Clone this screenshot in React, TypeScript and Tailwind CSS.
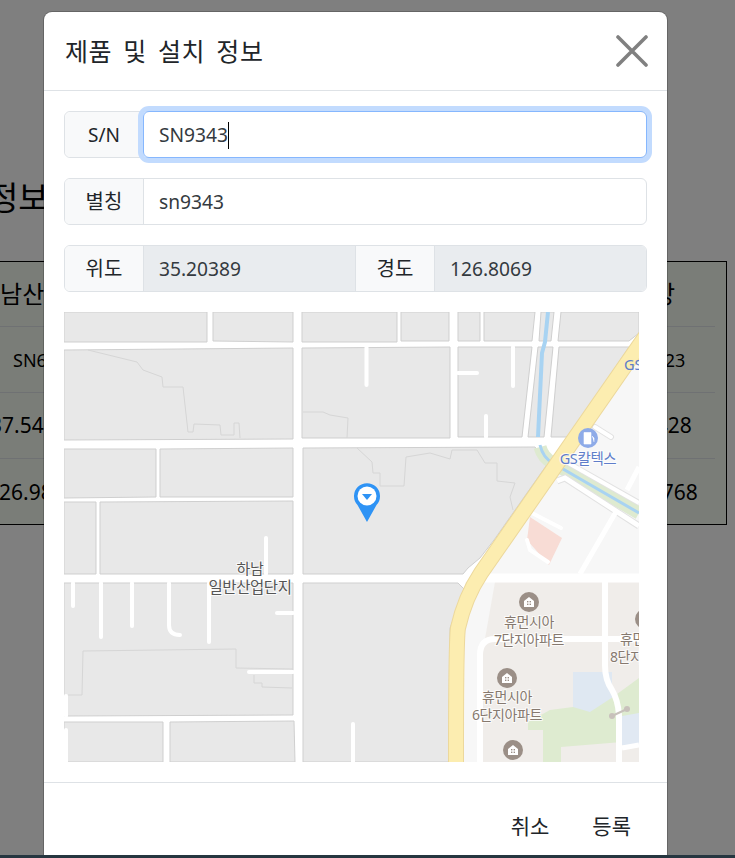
const font = { fontFamily: '"Noto Sans", "Noto Sans CJK KR", sans-serif' };

const blocks = [
  '64,312 207,312 207,342 64,342',
  '213,312 293,312 293,342 213,341',
  '302,312 397,312 397,342 302,342',
  '401,312 449,312 449,341 401,341',
  '458,312 480,312 480,341 458,341',
  '484,312 535,312 532,341 484,341',
  '541,312 554,312 551,341 539,341',
  '561,312 639,312 639,333 629,341 558,341',
  '64,350 293,348 293,439 64,440',
  '302,348 450,347 450,438 302,438',
  '458,347 532,347 522,437 458,437',
  '538,347 553,347 544,437 528,437',
  '559,347 629,347 582,417 567,437 551,437',
  '64,449 156,449 156,497 64,498',
  '160,449 293,448 293,497 160,497',
  '64,502 96,502 96,574 64,574',
  '100,502 293,501 293,574 100,574',
  '64,583 293,583 293,715 68,716 64,716',
  '64,722 163,722 163,762 64,762',
  '170,722 294,721 295,762 170,762',
  '303,448 535,447 541,455 546,466 494,540 480,558 468,568 463,574 303,574',
  '303,583 458,583 465,590 450,628 449,762 303,762',
];

const parcels = [
  '88,350 137,362 143,370 162,377 163,387 183,387 187,423 188,432 193,432 194,424 220,425 221,435 234,435 234,423 239,423 240,438',
  '303,412 323,412 330,415 348,418 347,438',
  '357,448 372,462 373,473 380,473 380,486 404,486 406,457 430,453 450,459 452,450 477,450 485,463 497,463 497,481 515,483 510,497 513,510',
  '68,695 82,695 83,651 236,649 236,668 293,669',
  '254,675 254,683 262,683 262,687 292,688',
];

const stubs = [
  'M366.5 347V385', 'M458 373H477', 'M513 347V386', 'M486 437V416',
  'M73 583V606', 'M101 583V637', 'M132 583V626', 'M169 583V625Q169 635 180 635',
  'M209 583V642', 'M293 613H277', 'M293 672H249', 'M66 716V696', 'M66 730V762',
  'M266 574V538', 'M353 762V724',
];

function PoiHouse({ x, y }: { x: number; y: number }) {
  return (
    <g>
      <circle cx={x} cy={y} r={10} fill="#9b8f87" />
      <path d={`M${x - 5} ${y + 5}V${y - 1}L${x} ${y - 5}L${x + 5} ${y - 1}V${y + 5}Z`} fill="#fff" />
      <rect x={x - 2} y={y - 1} width={1.4} height={1.4} fill="#9b8f87" />
      <rect x={x + 0.6} y={y - 1} width={1.4} height={1.4} fill="#9b8f87" />
      <rect x={x - 2} y={y + 1.6} width={1.4} height={1.4} fill="#9b8f87" />
      <rect x={x + 0.6} y={y + 1.6} width={1.4} height={1.4} fill="#9b8f87" />
    </g>
  );
}

function MapLabel({ x, y, fill, size = 14, children }: { x: number; y: number; fill: string; size?: number; children: string }) {
  return (
    <text x={x} y={y} textAnchor="middle" fontSize={size} fill={fill} stroke="#ffffff" strokeOpacity={0.75} strokeWidth={2} paintOrder="stroke" letterSpacing={-0.4}>
      {children}
    </text>
  );
}

function MapView() {
  return (
    <svg viewBox="64 312 575 450" className="block w-[575px] h-[450px]" style={font}>
      <rect x={64} y={312} width={575} height={450} fill="#ffffff" />

      {/* east side of the highway */}
      <polygon points="650,330 639,312 639,582 470,582 510,530 590,420" fill="#f7f7f7" />
      <polygon points="465,582 639,582 639,762 464,762" fill="#f7f7f7" />
      <polygon points="495,582 639,582 639,762 483,762 483,650" fill="#f0edea" />

      {blocks.map((p) => (
        <polygon key={p} points={p} fill="#e8e8e8" stroke="#cfcfcf" strokeWidth={1} />
      ))}
      {parcels.map((p) => (
        <polyline key={p} points={p} fill="none" stroke="#d6d6d6" strokeWidth={1} />
      ))}
      {stubs.map((d) => (
        <path key={d} d={d} fill="none" stroke="#ffffff" strokeWidth={4} strokeLinecap="round" />
      ))}

      {/* park, ponds */}
      <polygon points="573,672 612,672 612,712 573,712" fill="#dfe8f2" />
      <polygon points="622,713 639,713 639,745 622,745" fill="#e1e9f3" />
      <polygon points="528,730 528,722 550,710 573,707 590,712 613,697 639,678 639,713 622,716 622,742 561,747 561,762 543,762 543,730" fill="#deebd0" />

      {/* canal */}
      <path d="M548 312L545 342L542 353L538 437" fill="none" stroke="#a8d3f2" strokeWidth={4} />
      <path d="M540 447Q543 458 553 463L563 469L639 513" fill="none" stroke="#deead0" strokeWidth={13} />
      <path d="M540 445Q543 458 553 463L563 469L639 513" fill="none" stroke="#a8d3f2" strokeWidth={3} />

      {/* east roads */}
      <path d="M563 460L639 503" fill="none" stroke="#e2e2e2" strokeWidth={6} />
      <path d="M563 460L639 503" fill="none" stroke="#ffffff" strokeWidth={4} />
      <path d="M557 481L565 478L639 526" fill="none" stroke="#e2e2e2" strokeWidth={7} />
      <path d="M557 481L565 478L639 526" fill="none" stroke="#ffffff" strokeWidth={5} />
      <path d="M595 427L611 437" fill="none" stroke="#e2e2e2" strokeWidth={6} strokeLinecap="round" />
      <path d="M595 427L611 437" fill="none" stroke="#ffffff" strokeWidth={4} strokeLinecap="round" />
      <path d="M639 467L627 490M617 510L580 574" fill="none" stroke="#ffffff" strokeWidth={5} />

      {/* gas station building */}
      <polygon points="530,517 562,538 549,565 527,540" fill="#f8dcd5" />
      <path d="M530 512L561 528M527 540L530 550L548 562" fill="none" stroke="#ffffff" strokeWidth={4} strokeLinecap="round" />

      <path d="M465 578H639" fill="none" stroke="#ffffff" strokeWidth={9} />
      <path d="M480 762V655Q480 639 495 639H639" fill="none" stroke="#ffffff" strokeWidth={6} />
      <path d="M605 582V665Q605 680 612 690Q618 700 619 715V762" fill="none" stroke="#ffffff" strokeWidth={6} />
      <path d="M622 748L639 745" fill="none" stroke="#ffffff" strokeWidth={5} />
      <path d="M612 716L627 709" stroke="#c8c1bb" strokeWidth={2} />
      <circle cx={612} cy={716} r={3} fill="#c8c1bb" />
      <circle cx={627} cy={709} r={3} fill="#c8c1bb" />

      {/* highway */}
      <path d="M650 330L481 573Q465 597 458 628Q456 640 456 762" fill="none" stroke="#ecd89c" strokeWidth={16} />
      <path d="M650 330L481 573Q465 597 458 628Q456 640 456 762" fill="none" stroke="#fcedb0" strokeWidth={14} />

      {/* places */}
      <circle cx={588} cy={438} r={10} fill="#8eabe8" />
      <path d="M584 432.5H591V444H584ZM592 436L594 438V442" fill="#ffffff" stroke="#ffffff" strokeWidth={0.6} />
      <MapLabel x={588} y={464} fill="#5f7dc9" size={14.5}>GS칼텍스</MapLabel>
      <text x={624} y={370} fontSize={14.5} fill="#5f7dc9">GS</text>

      <PoiHouse x={529} y={602} />
      <MapLabel x={529} y={627} fill="#86796f">휴먼시아</MapLabel>
      <MapLabel x={529} y={645} fill="#86796f">7단지아파트</MapLabel>
      <PoiHouse x={507} y={678} />
      <MapLabel x={507} y={702} fill="#86796f">휴먼시아</MapLabel>
      <MapLabel x={507} y={720} fill="#86796f">6단지아파트</MapLabel>
      <PoiHouse x={513} y={750} />
      <PoiHouse x={645} y={619} />
      <MapLabel x={645} y={644} fill="#86796f">휴먼시아</MapLabel>
      <MapLabel x={645} y={662} fill="#86796f">8단지아파트</MapLabel>

      <MapLabel x={250} y={574} fill="#555555" size={15}>하남</MapLabel>
      <MapLabel x={250} y={593} fill="#555555" size={15.5}>일반산업단지</MapLabel>

      {/* marker */}
      <path d="M367 522L357.5 505A13 13 0 1 1 376.5 505Z" fill="#2e93f5" />
      <circle cx={367} cy={496} r={9.5} fill="#ffffff" />
      <path d="M362 494H372L367 500Z" fill="#2e93f5" />
    </svg>
  );
}

export default function App() {
  return (
    <div className="relative h-[858px] overflow-hidden bg-white text-black" style={font}>
      {/* page behind the dialog */}
      <div className="pt-[174px] -ml-[60px] w-[787px]">
        <h2 className="pl-[48px] text-[33px] leading-[48px]">정보</h2>
        <div className="mt-[39px] border border-black bg-[#f5faf1] px-[11px] h-[264px]">
          <div className="flex h-[65px] border-b border-[#dee2e6] text-[24px] items-center justify-between">
            <div className="pl-[26px]">하남산단</div>
            <div className="w-[124px] text-center">공장</div>
          </div>
          <div className="flex h-[66px] pt-px border-b border-[#dee2e6] text-[18px] items-center justify-between">
            <div className="pl-[61px]">SN6123</div>
            <div className="w-[124px] text-center">SN6123</div>
          </div>
          <div className="flex h-[66px] pt-px border-b border-[#dee2e6] text-[21px] items-center justify-between">
            <div className="pl-[38px]">37.5428</div>
            <div className="w-[124px] text-center">37.5428</div>
          </div>
          <div className="flex h-[65px] pt-[2px] text-[21px] items-center justify-between">
            <div className="pl-[35px]">126.98768</div>
            <div className="w-[124px] text-center">126.9768</div>
          </div>
        </div>
      </div>

      {/* backdrop + dialog */}
      <div className="absolute inset-0 bg-black/50">
        <div className="mt-[12px] ml-[44px] w-[623px] h-[900px] rounded-[8px] bg-white text-[#212529] shadow-[0_0_0_1px_rgba(0,0,0,0.2)]">
          <div className="flex h-[79px] items-center justify-between border-b border-[#dee2e6] pl-[21px] pr-[19px]">
            <h5 className="pt-px text-[25px] tracking-[0.6px] [word-spacing:4px]">제품 및 설치 정보</h5>
            <svg viewBox="0 0 32 32" className="w-[32px] h-[32px]" fill="none" stroke="#808080" strokeWidth={3.6} strokeLinecap="round">
              <path d="M2 2L30 30M30 2L2 30" />
            </svg>
          </div>

          <div className="flex flex-col gap-[20px] px-[20px] pt-[20px] pb-[20px]">
            <div className="flex h-[47px] rounded-[6px] border border-[#dee2e6]">
              <div className="w-[78px] rounded-l-[6px] flex items-center justify-center bg-[#f8f9fa] pt-px text-[19px]">S/N</div>
              <div className="relative -m-px ml-0 flex-1 flex items-center rounded-[6px] border border-[#86b7fe] pl-[15px] pt-px text-[19.2px] text-[#343a40] shadow-[0_0_0_5px_#c2dbfe]">
                SN9343
                <span className="inline-block w-px h-[27px] bg-black" />
              </div>
            </div>

            <div className="flex h-[47px] overflow-hidden rounded-[6px] border border-[#dee2e6]">
              <div className="w-[79px] flex items-center justify-center bg-[#f8f9fa] border-r border-[#dee2e6] text-[20px]">별칭</div>
              <div className="flex-1 flex items-center pl-[15px] pt-px text-[19.2px] text-[#343a40]">sn9343</div>
            </div>

            <div className="flex h-[47px] overflow-hidden rounded-[6px] border border-[#dee2e6]">
              <div className="w-[79px] flex items-center justify-center bg-[#f8f9fa] border-r border-[#dee2e6] text-[20px]">위도</div>
              <div className="w-[211px] flex items-center pl-[15px] pt-px bg-[#e9ecef] text-[19.2px] text-[#343a40]">35.20389</div>
              <div className="w-[80px] shrink-0 flex items-center justify-center bg-[#f8f9fa] border-x border-[#dee2e6] text-[20px]">경도</div>
              <div className="flex-1 flex items-center pl-[15px] pt-px bg-[#e9ecef] text-[19.2px] text-[#343a40]">126.8069</div>
            </div>

            <MapView />
          </div>

          <div className="flex justify-end gap-[43px] border-t border-[#dee2e6] pt-[28px] pr-[36px] text-[21px] leading-[30px]">
            <span>취소</span>
            <span>등록</span>
          </div>
        </div>
      </div>

      {/* window edge */}
      <div className="absolute inset-x-0 bottom-0 h-[3px] bg-[#263640]" />
    </div>
  );
}
